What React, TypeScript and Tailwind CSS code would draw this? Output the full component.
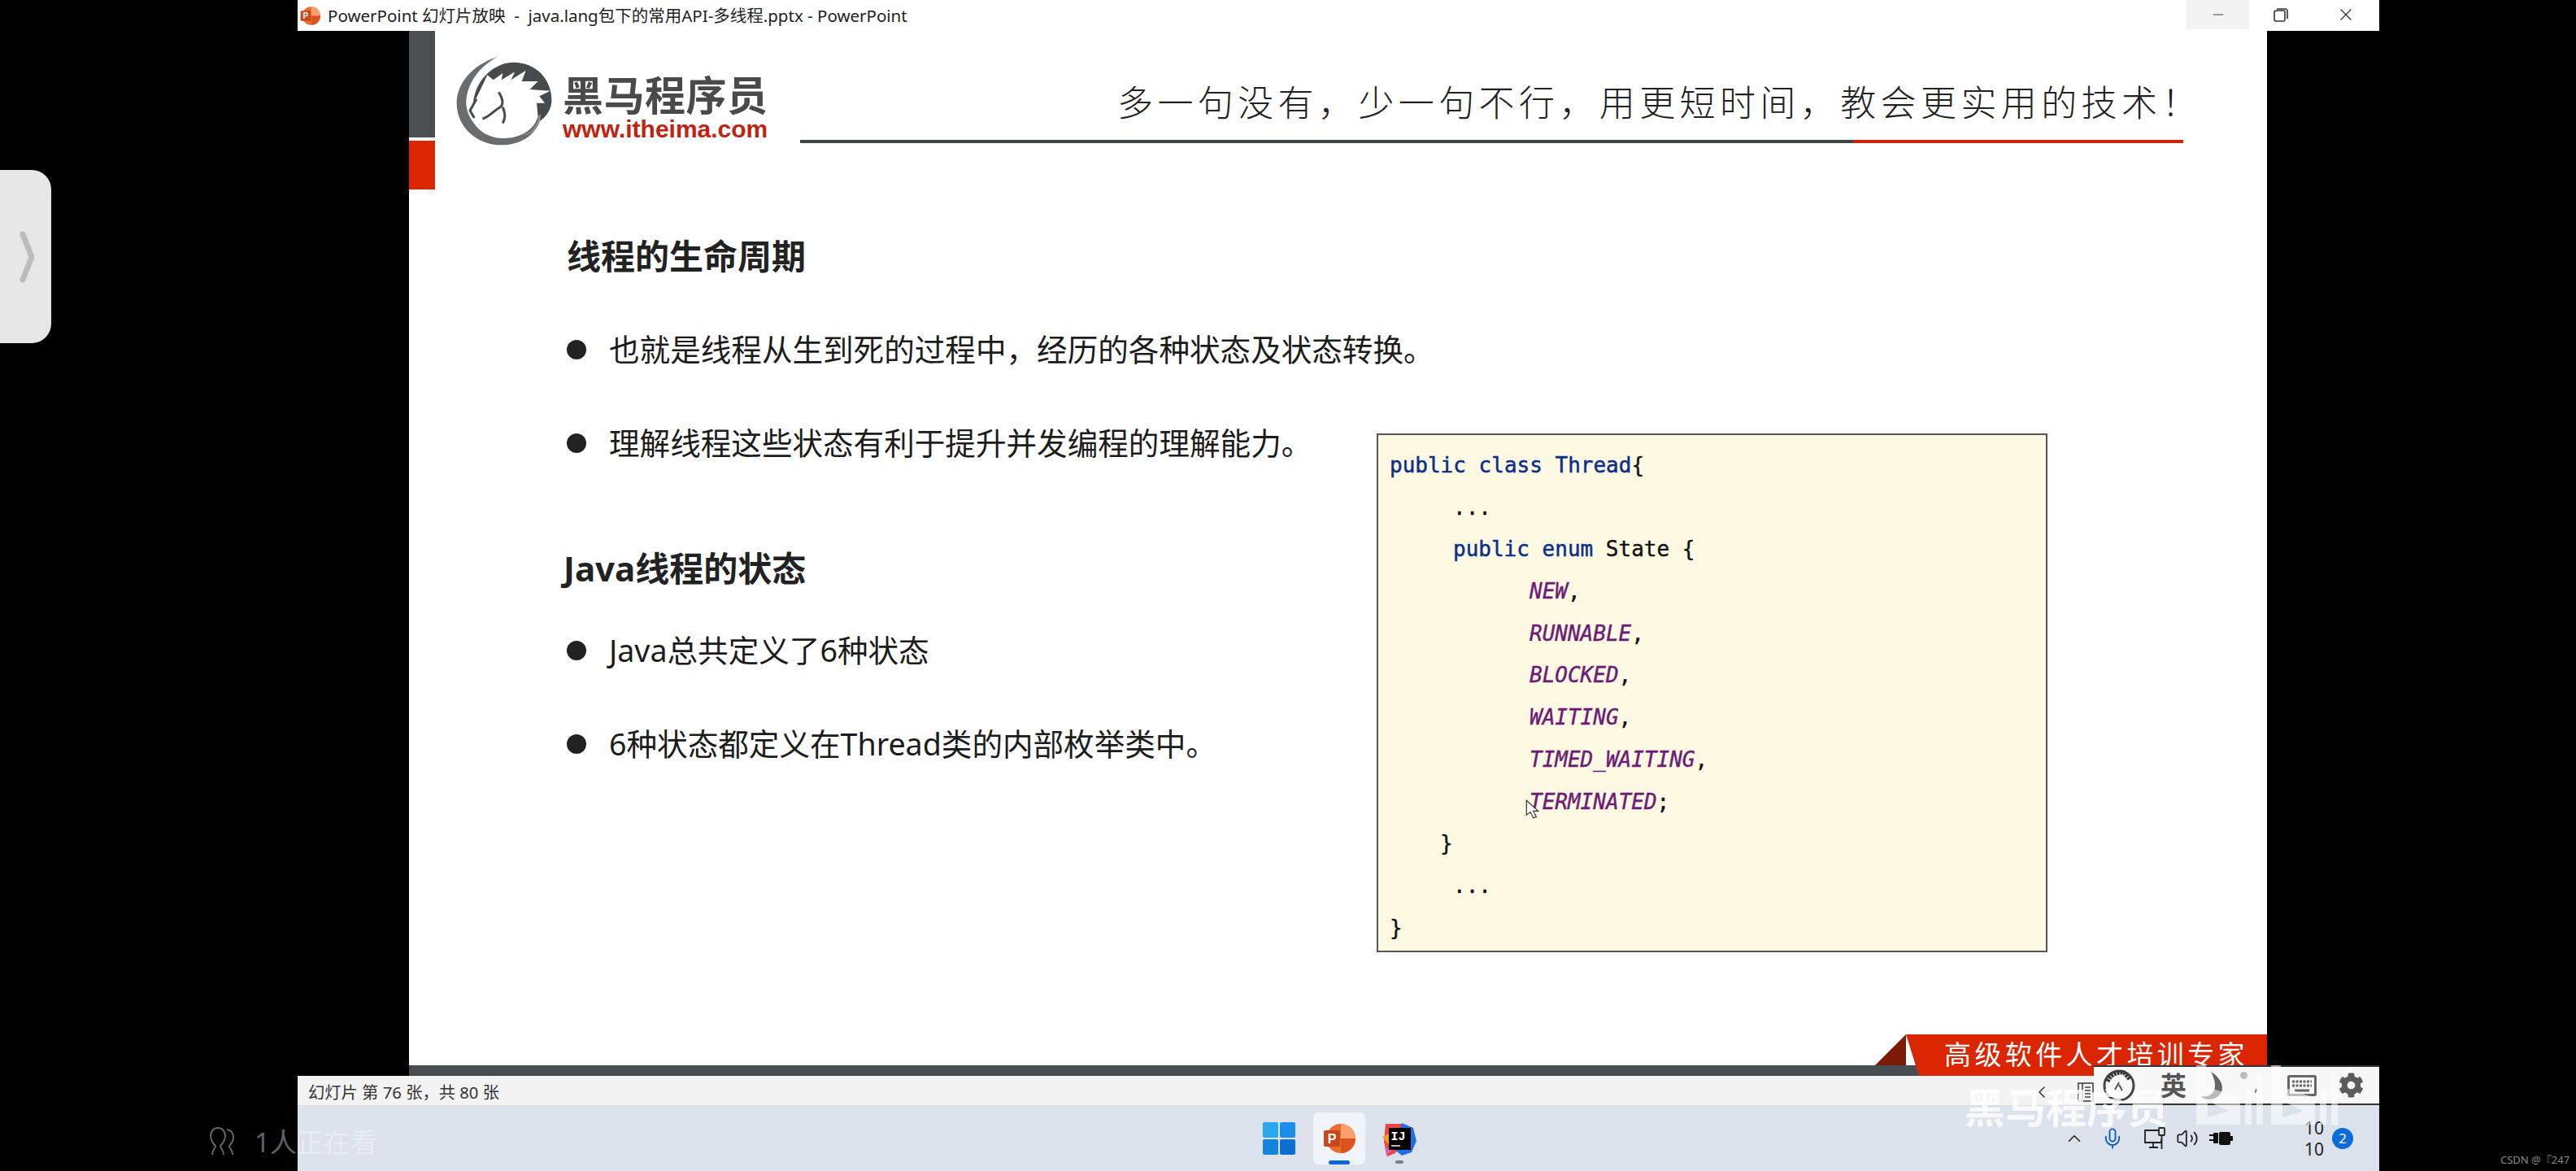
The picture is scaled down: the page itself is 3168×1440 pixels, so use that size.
import React from 'react';
import { ChevronLeft, ChevronUp, Mic, Minus, Volume2, X } from 'lucide-react';
import { FaCog } from 'react-icons/fa';

type Token = { text: string; kind: 'kw' | 'plain' | 'enum' };

const codeLines: { indent: string; tokens: Token[] }[] = [
  { indent: 'pl-0', tokens: [{ text: 'public class Thread', kind: 'kw' }, { text: '{', kind: 'plain' }] },
  { indent: 'pl-[78px]', tokens: [{ text: '...', kind: 'plain' }] },
  { indent: 'pl-[78px]', tokens: [{ text: 'public enum ', kind: 'kw' }, { text: 'State {', kind: 'plain' }] },
  { indent: 'pl-[172px]', tokens: [{ text: 'NEW', kind: 'enum' }, { text: ',', kind: 'plain' }] },
  { indent: 'pl-[172px]', tokens: [{ text: 'RUNNABLE', kind: 'enum' }, { text: ',', kind: 'plain' }] },
  { indent: 'pl-[172px]', tokens: [{ text: 'BLOCKED', kind: 'enum' }, { text: ',', kind: 'plain' }] },
  { indent: 'pl-[172px]', tokens: [{ text: 'WAITING', kind: 'enum' }, { text: ',', kind: 'plain' }] },
  { indent: 'pl-[172px]', tokens: [{ text: 'TIMED_WAITING', kind: 'enum' }, { text: ',', kind: 'plain' }] },
  { indent: 'pl-[172px]', tokens: [{ text: 'TERMINATED', kind: 'enum' }, { text: ';', kind: 'plain' }] },
  { indent: 'pl-[62px]', tokens: [{ text: '}', kind: 'plain' }] },
  { indent: 'pl-[78px]', tokens: [{ text: '...', kind: 'plain' }] },
  { indent: 'pl-0', tokens: [{ text: '}', kind: 'plain' }] },
];

const tokenClass = {
  kw: 'text-[#0b2f86] [-webkit-text-stroke:0.5px_#0b2f86]',
  plain: 'text-[#111] [-webkit-text-stroke:0.4px_#111]',
  enum: 'text-[#6b1c74] italic [-webkit-text-stroke:0.4px_#6b1c74]',
};

const HorseLogo = () => (
  <svg viewBox="0 0 420 390" className="w-[140px] h-[130px]">
    <path
      d="M185 30C90 60 35 130 35 200c0 90 75 155 165 155 80 0 140-45 145-115l-20 0c-15 50-65 80-125 80-70 0-125-50-130-115C68 140 110 70 185 30Z"
      fill="#696d70"
    />
    <path d="M95 215C95 120 170 50 245 50c80 0 140 60 140 140 0 30-15 55-40 75l-120 40-110-40Z" fill="#474b4e" />
    <path
      d="M148 97l22 18 35-25-5 25 50-30-15 30 55-35-15 40 60 0-30 30 75 5-40 20 20 25-30 0 5 50c-15 50-65 80-125 80-70 0-110-40-125-85l-2-20 28-50Z"
      fill="#fff"
    />
    <path d="M108 185L84 228l16 27" fill="none" stroke="#474b4e" strokeWidth="9" />
    <path
      d="M190 160c20 30 15 50 5 55-25 15-45 40-65 43M205 215c10 25 10 40 0 60"
      fill="none"
      stroke="#474b4e"
      strokeWidth="9"
    />
    <path d="M335 250c0 30-20 60-60 70 40 0 70-30 70-80Z" fill="#8a8e90" />
  </svg>
);

const PptIcon = ({ className }: { className: string }) => (
  <svg viewBox="0 0 40 40" className={className}>
    <circle cx="22" cy="20" r="18" fill="#ed6c31" />
    <path d="M22 2a18 18 0 0 1 18 18H22Z" fill="#f9a06c" />
    <path d="M22 20h18a18 18 0 0 1-18 18Z" fill="#d9541e" />
    <rect x="1" y="10" width="20" height="20" rx="2" fill="#c4481a" />
    <text x="11" y="26" textAnchor="middle" fontSize="16" fontWeight="700" fill="#fff" fontFamily="Liberation Sans">
      P
    </text>
  </svg>
);

const TaskbarIcons = () => (
  <div className="flex items-center pl-[1187px]">
    <svg viewBox="0 0 40 40" className="w-[40px] h-[40px]">
      <rect x="0" y="0" width="19" height="19" rx="2" fill="#29a8ee" />
      <rect x="21" y="0" width="19" height="19" rx="2" fill="#1a8fe8" />
      <rect x="0" y="21" width="19" height="19" rx="2" fill="#1384dc" />
      <rect x="21" y="21" width="19" height="19" rx="2" fill="#0b6fd0" />
    </svg>
    <div className="relative ml-[22px] flex h-[64px] w-[64px] items-center justify-center rounded-md bg-[#f1f4f9]">
      <PptIcon className="w-[40px] h-[40px]" />
      <div className="absolute bottom-0 left-[19px] h-[5px] w-[26px] rounded-full bg-[#0b66d0]" />
    </div>
    <div className="relative ml-[21px] h-[40px] w-[42px]">
      <svg viewBox="0 0 42 42" className="w-[42px] h-[42px]">
        <path d="M4 2h20l8 10-16 26-10 4-4-18Z" fill="#f0443f" />
        <path d="M24 1l14 6 4 16-6 14-12 4-10-8Z" fill="#1f6fe0" />
        <path d="M0 18l8-4v14Z" fill="#f49a1c" />
        <path d="M3 30l10 4-8 7Z" fill="#d862a8" />
        <rect x="8" y="7" width="27" height="27" fill="#000" />
        <text x="10.5" y="22" fontSize="15" fontWeight="700" fill="#fff" fontFamily="Liberation Mono">
          IJ
        </text>
        <rect x="11" y="28" width="11" height="2" fill="#bbb" />
      </svg>
      <div className="absolute bottom-[-11px] left-[16px] h-[4px] w-[10px] rounded-full bg-[#7b7f85]" />
    </div>
  </div>
);

const Tray = () => (
  <div className="ml-auto flex items-center">
    <ChevronUp className="w-[26px] h-[26px] text-[#222]" strokeWidth={1.5} />
    <Mic className="ml-[20px] w-[28px] h-[28px] text-[#0b5cbf]" strokeWidth={1.6} />
    <svg viewBox="0 0 28 28" className="ml-[24px] w-[28px] h-[28px]" fill="none" stroke="#222" strokeWidth="1.8">
      <path d="M18 4H2v15h20v-4M12 19v5M7 25h11" />
      <rect x="19" y="1" width="7" height="9" rx="1" />
      <path d="M22.5 10v17" />
    </svg>
    <Volume2 className="ml-[12px] w-[28px] h-[28px] text-[#222]" strokeWidth={1.5} />
    <svg viewBox="0 0 30 22" className="ml-[12px] w-[30px] h-[22px]">
      <path d="M1 7h6M1 13h6" stroke="#111" strokeWidth="2" />
      <rect x="6" y="4" width="6" height="13" rx="1" fill="#111" />
      <rect x="13" y="3" width="14" height="16" rx="2" fill="#111" />
      <rect x="27" y="8" width="3" height="6" fill="#111" />
    </svg>
    <div className="ml-[91px] flex w-[18px] flex-col items-center text-[21px] leading-[26px] text-[#222]">
      <span>10</span>
      <span>10</span>
    </div>
    <div className="ml-[13px] mr-[32px] flex h-[26px] w-[26px] items-center justify-center rounded-full bg-[#0a6cd6] text-[17px] text-white">
      2
    </div>
  </div>
);

const ImeBar = () => (
  <div className="absolute left-[2575px] top-[1310px] flex h-[49px] w-[351px] items-center border-y-2 border-[#333] bg-[#f7f7f7]">
    <svg viewBox="0 0 42 42" className="ml-[10px] w-[42px] h-[42px]" fill="none">
      <circle cx="21" cy="21" r="18" stroke="#444" strokeWidth="3" />
      <path d="M7 16C10 8 18 4 27 5l7 8" stroke="#333" strokeWidth="5" strokeDasharray="3 1" />
      <path d="M21 17l-5 9M21 20l4 7" stroke="#555" strokeWidth="2" />
    </svg>
    <span className="ml-[30px] w-[33px] text-[32px] leading-none font-bold text-[#555]">英</span>
    <svg viewBox="0 0 26 34" className="ml-[17px] w-[26px] h-[34px]">
      <path d="M12 0c10 6 14 14 14 20 0 8-8 14-16 14-4 0-8-1-10-4 10 2 17-4 17-13 0-6-2-12-5-17Z" fill="#666" />
    </svg>
    <div className="ml-[22px] flex h-[34px] w-[31px] items-start gap-[8px]">
      <div className="h-[9px] w-[9px] rounded-full bg-[#bbb]" />
      <span className="mt-[6px] text-[20px] leading-none text-[#666]">,</span>
    </div>
    <svg viewBox="0 0 36 26" className="ml-[27px] w-[36px] h-[26px]">
      <rect x="1.5" y="1.5" width="33" height="23" rx="1" fill="none" stroke="#666" strokeWidth="3" />
      <path d="M6 8h24M6 13h24" stroke="#666" strokeWidth="3" strokeDasharray="3 1.5" />
      <path d="M9 19h18" stroke="#666" strokeWidth="3" />
    </svg>
    <FaCog className="ml-[27px] w-[31px] h-[31px] text-[#5c5c5c]" />
  </div>
);

const Watermarks = () => (
  <>
    {/* station watermark over the bottom right corner */}
    <div className="absolute left-[2416px] top-[1337px] whitespace-nowrap text-[50px] leading-[50px] font-bold text-white/80">
      黑马程序员
    </div>
    <svg viewBox="0 0 178 73" className="absolute left-[2701px] top-[1310px] w-[178px] h-[73px]" fill="#fff" fillOpacity="0.55">
      <path fillRule="evenodd" d="M0 0h12v26l42 14v33H0ZM14 44v20l26-8Z" />
      <rect x="60" y="30" width="8" height="43" />
      <rect x="74" y="10" width="8" height="63" />
      <path fillRule="evenodd" d="M92 0h12v26l42 14v33H92ZM106 44v20l26-8Z" />
      <rect x="152" y="30" width="8" height="43" />
      <rect x="166" y="10" width="8" height="63" />
    </svg>
    <div className="absolute left-[255px] top-[1386px] flex items-center text-white/40">
      <svg viewBox="0 0 36 36" className="w-[36px] h-[36px]" fill="none" stroke="currentColor" strokeWidth="2">
        <path d="M6 34c0-6 4-8 4-11-3-3-6-7-6-12 0-6 4-10 9-10s9 4 9 10c0 5-3 9-6 12 0 3 4 5 4 11" />
        <path d="M24 3c5 1 8 4 8 9 0 4-2 8-5 11 0 3 4 5 4 11" />
      </svg>
      <span className="ml-[22px] whitespace-nowrap text-[33px] leading-none">1人正在看</span>
    </div>
    <div className="absolute left-[3075px] top-[1418px] whitespace-nowrap text-[13px] leading-[16px] text-[#8a8a8a]">CSDN @『247</div>
  </>
);

const Bullet = ({ text }: { text: string }) => (
  <div className="flex h-[50px] items-center whitespace-nowrap text-[37.6px] leading-none text-[#1c1c1c]">
    <span className="mr-[28px] h-[24px] w-[24px] shrink-0 rounded-full bg-[#222]" />
    {text}
  </div>
);

const Slide = () => (
  <div className="flex h-full w-[2285px] flex-col bg-white">
    <div className="flex flex-1">
      <div className="flex w-[32px] flex-col gap-[4px]">
        <div className="h-[131px] bg-[#4a4f52]" />
        <div className="h-[60px] bg-[#d92600]" />
      </div>
      <div className="flex flex-1 flex-col">
        {/* header */}
        <div className="flex h-[138px] items-start">
          <div className="mt-[22px] ml-[15px]">
            <HorseLogo />
          </div>
          <div className="mt-[52px] ml-[2px] w-[260px]">
            <div className="text-[50px] leading-[54px] font-bold tracking-[0.5px] text-[#4a4a4a] whitespace-nowrap">黑马程序员</div>
            <div className="text-[30px] leading-[30px] font-bold text-[#c0230f] [font-family:'Liberation_Sans',sans-serif] whitespace-nowrap">
              www.itheima.com
            </div>
          </div>
          <div className="ml-[32px] flex h-full w-[1701px] flex-col justify-end">
            <div className="mb-[16px] pl-[390px] text-[44px] leading-[60px] font-light tracking-[5.4px] whitespace-nowrap text-[#222]">
              多一句没有，少一句不行，用更短时间，教会更实用的技术！
            </div>
            <div className="flex h-[4px]">
              <div className="flex-1 bg-[#3f4447]" />
              <div className="w-[406px] bg-[#c8260a]" />
            </div>
          </div>
        </div>
        {/* body */}
        <div className="flex pl-[162px]">
          <div className="flex w-[996px] shrink-0 flex-col">
            <div className="mt-[114px] h-[50px] whitespace-nowrap text-[42px] leading-[50px] font-bold text-[#222]">线程的生命周期</div>
            <div className="mt-[65px]"><Bullet text="也就是线程从生到死的过程中，经历的各种状态及状态转换。" /></div>
            <div className="mt-[65px]"><Bullet text="理解线程这些状态有利于提升并发编程的理解能力。" /></div>
            <div className="mt-[104px] ml-[-4px] h-[50px] whitespace-nowrap text-[42px] leading-[50px] font-bold text-[#222]">Java线程的状态</div>
            <div className="mt-[51px]"><Bullet text="Java总共定义了6种状态" /></div>
            <div className="mt-[65px]"><Bullet text="6种状态都定义在Thread类的内部枚举类中。" /></div>
          </div>
          <div className="relative mt-[357px] h-[638px] w-[825px] border-2 border-[#555] bg-[#fef9e3] pt-[12px] pl-[14px] text-[26px] [font-family:'DejaVu_Sans_Mono',monospace]">
            {codeLines.map((line, i) => (
              <div key={i} className={`h-[51.7px] leading-[51.7px] whitespace-pre ${line.indent}`}>
                {line.tokens.map((t, j) => (
                  <span key={j} className={tokenClass[t.kind]}>{t.text}</span>
                ))}
              </div>
            ))}
            {/* mouse pointer */}
            <svg viewBox="0 0 14 20" className="absolute left-[181px] top-[448px] w-[17px] h-[24px]">
              <path d="M1 1v15l4-3 3 6 3-1-3-6h5Z" fill="#fff" stroke="#333" strokeWidth="1" />
            </svg>
          </div>
        </div>
      </div>
    </div>
    {/* footer bar with the red banner */}
    <div className="relative flex h-[51px] items-end">
      <div className="h-[13px] w-full bg-[#474c50]" />
      <div className="absolute bottom-[13px] left-[1803px] h-[38px] w-[38px] bg-[#7d1a06] [clip-path:polygon(100%_0,100%_100%,0_100%)]" />
      <div className="absolute right-0 bottom-0 flex h-[51px] w-[444px] items-start bg-[#d92600] pt-[3px] pl-[47px] text-[33px] leading-[44px] tracking-[4.4px] whitespace-nowrap text-white [clip-path:polygon(0_0,100%_0,100%_100%,16px_100%)]">
        高级软件人才培训专家
      </div>
    </div>
  </div>
);

export default function App() {
  return (
    <div className="relative h-[1440px] w-[3168px] overflow-hidden bg-black pl-[366px] [font-family:'Noto_Sans','Noto_Sans_CJK_SC',sans-serif]">
      <div className="flex h-full w-[2560px] flex-col">
        {/* title bar */}
        <div className="flex h-[38px] items-start bg-white">
          <PptIcon className="mt-[7px] ml-[3px] w-[25px] h-[25px]" />
          <div className="ml-[9px] text-[20.5px] leading-[38px] whitespace-pre text-[#222]">
            PowerPoint 幻灯片放映  -  java.lang包下的常用API-多线程.pptx - PowerPoint
          </div>
          <div className="ml-auto flex">
            <div className="flex h-[36px] w-[77px] items-center justify-center bg-[#f3f3f3]">
              <Minus className="w-[20px] h-[20px] text-[#444]" strokeWidth={1.2} />
            </div>
            <div className="flex h-[36px] w-[77px] items-center justify-center">
              <svg viewBox="0 0 18 18" className="w-[18px] h-[18px]" fill="none" stroke="#333" strokeWidth="1.6">
                <rect x="1" y="4" width="13" height="13" rx="2" />
                <path d="M4 2h10a3 3 0 0 1 3 3v9" />
              </svg>
            </div>
            <div className="flex h-[36px] w-[83px] items-center justify-center">
              <X className="w-[24px] h-[24px] text-[#333]" strokeWidth={1.3} />
            </div>
          </div>
        </div>
        {/* slide area */}
        <div className="h-[1285px] pl-[137px]">
          <Slide />
        </div>
        {/* status bar */}
        <div className="flex h-[37px] items-center border-b border-[#dcdcdc] bg-[#f3f3f3] pt-[4px] pl-[13px]">
          <span className="text-[20.3px] leading-none text-[#333]">幻灯片 第 76 张，共 80 张</span>
          <ChevronLeft className="ml-[1885px] w-[24px] h-[24px] text-[#333]" strokeWidth={1.5} />
          <svg viewBox="0 0 20 24" className="ml-[32px] w-[20px] h-[24px]" fill="none" stroke="#444" strokeWidth="1.6">
            <rect x="1" y="1" width="18" height="22" />
            <path d="M6 1v22M9 6h7M9 10h7M9 14h7M9 18h7" />
          </svg>
        </div>
        {/* taskbar */}
        <div className="flex h-[80px] items-center bg-[#dce2ec]">
          <TaskbarIcons />
          <Tray />
        </div>
      </div>

      {/* side handle */}
      <div className="absolute left-0 top-[209px] flex h-[213px] w-[63px] items-center rounded-r-[24px] bg-[#e6e6e6] pl-[24px]">
        <svg viewBox="0 0 18 64" className="w-[18px] h-[64px]" fill="none" stroke="#bcbcbc" strokeWidth="7" strokeLinecap="round" strokeLinejoin="round">
          <path d="M4 4l11 28L4 60" />
        </svg>
      </div>

      <ImeBar />
      <Watermarks />
    </div>
  );
}
